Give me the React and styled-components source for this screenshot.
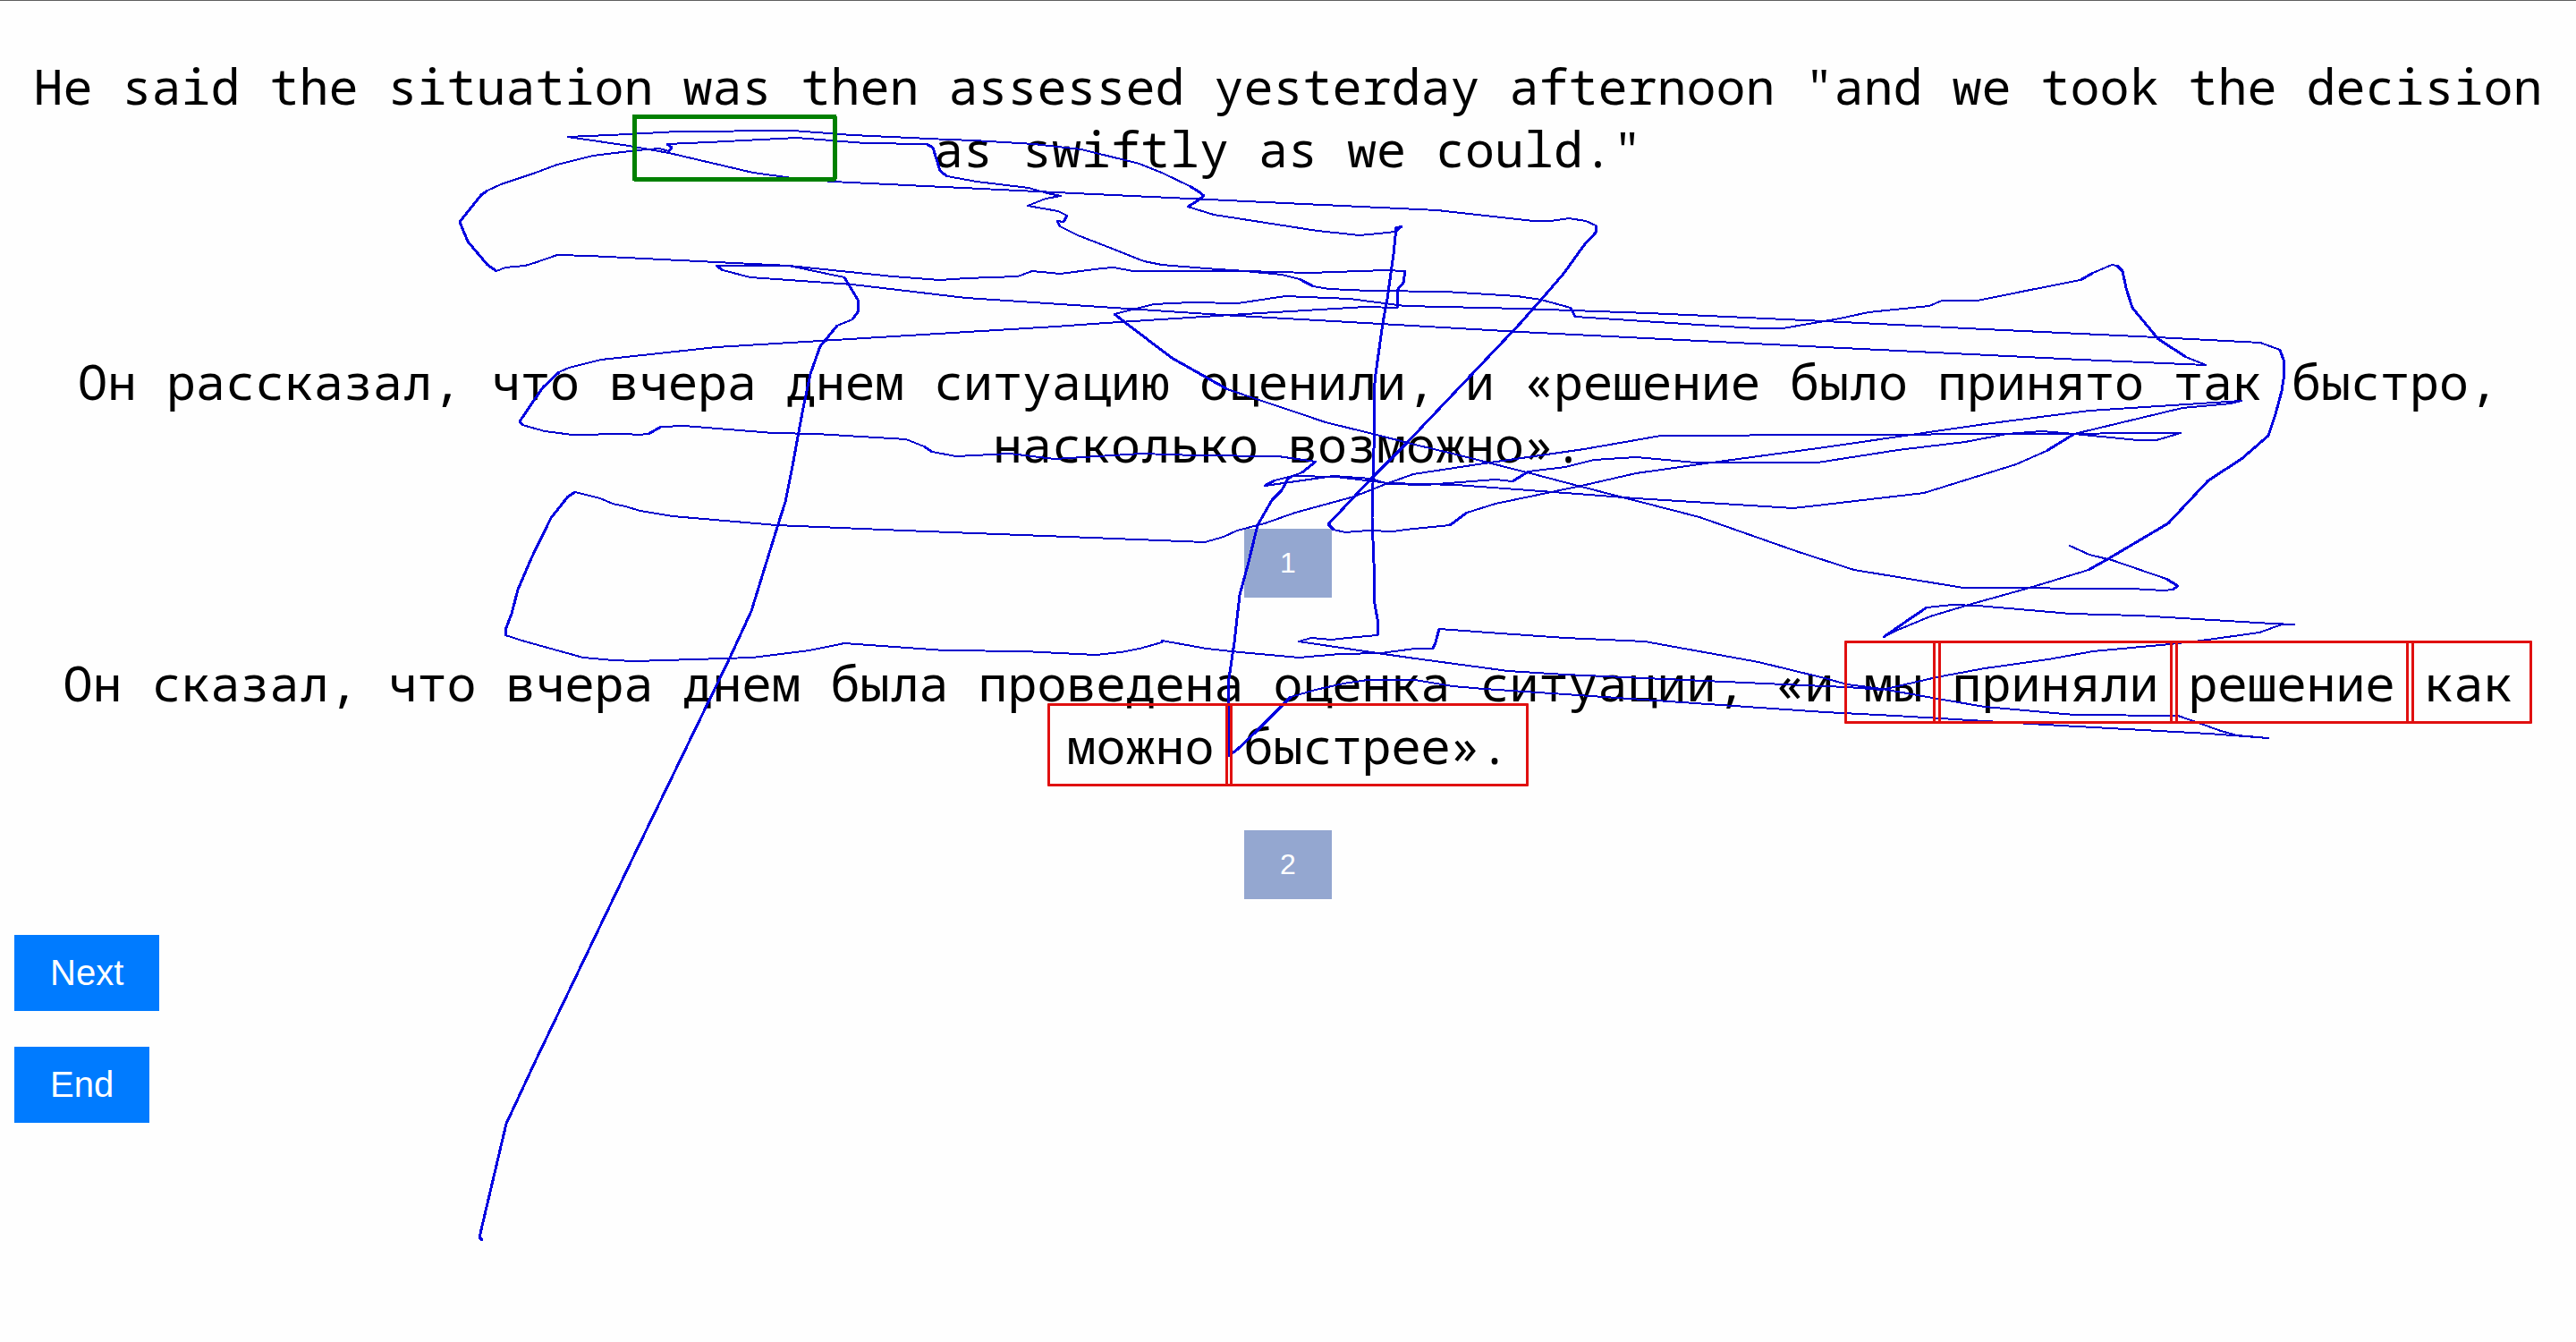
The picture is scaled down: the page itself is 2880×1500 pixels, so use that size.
import React from "react";
import styled, { createGlobalStyle } from "styled-components";

const GlobalStyle = createGlobalStyle`
  *, *::before, *::after { box-sizing: border-box; }
  html { background: #fefefe; }
  body { margin: 0; }
`;

const Page = styled.main`
  position: relative;
  min-height: 100vh;
  padding: 60px 16px 0;
  border-top: 1px solid #5f5f5f;
  color: #000;
`;

const Source = styled.p`
  margin: 0 0 190px;
  font: 55px/70px Consolas, "Noto Sans Mono", "DejaVu Sans Mono", monospace;
  text-align: center;
`;

const Candidate = styled(Source)`
  margin: 0 0 60px;
`;

const Option = styled.section`
  display: flex;
  flex-direction: column;
  align-items: center;
  margin-bottom: 60px;
`;

const Word = styled.span`
  position: relative;
  display: inline-block;

  &::after {
    content: "";
    position: absolute;
    z-index: 2;
    inset: -12px -21px -11px;
    border: 3px solid #e01010;
    border-radius: 1px;
  }
`;

const Button = styled.button`
  border: 0;
  padding: 20px 40px;
  color: #fff;
  background: #007bff;
  font: 40px/45px "Liberation Sans", Arial, sans-serif;
`;

const ChoiceButton = styled(Button)`
  background: #94a7d0;
  font-size: 32px;
  line-height: 37px;
`;

const Actions = styled.div`
  display: flex;
  flex-direction: column;
  align-items: flex-start;
  gap: 40px;
  margin-top: -20px;
`;

const GazeLayer = styled.svg`
  position: absolute;
  z-index: 1;
  top: 0;
  left: 0;
  display: block;
  width: 100%;
  pointer-events: none;
  fill: none;
  stroke-linejoin: round;
  stroke-linecap: round;
  shape-rendering: crispEdges;
`;

const traces = [
  "635,152 703,149 757,146 886,145 953,150 1060,155 1089,156 1156,160 1209,166 1274,182 1301,193 1330,207 1340,213 1346,218 1338,224 1328,230 1357,239 1428,250 1473,257 1520,262 1542,260 1560,258 1567,252 1561,253 1558,283 1551,333 1546,360 1538,417 1536,437 1536,500 1534,578 1536,628 1537,674 1541,697 1540,709 1506,712 1489,714 1466,712 1452,716 1533,728 1582,735 1686,749 1750,753 2040,766 2065,767 2104,770 2165,756 2219,746 2290,736 2340,727 2426,719 2461,715 2526,706 2551,697 2565,697 2540,696 2390,687 2315,685 2269,681 2211,676 2183,675 2154,678 2129,695 2106,711 2122,703 2158,688 2201,675 2269,656 2335,636 2358,623 2424,584 2469,536 2506,512 2536,486 2544,462 2551,436 2553,423 2553,401 2549,390 2527,382 2411,376 2219,367 2040,358 1843,349 1700,344 1571,341 1509,333 1437,330 1384,338 1332,337 1290,339 1274,343 1246,350 1256,358 1310,399 1372,434 1482,471 1535,484 1582,496 1624,506 1711,528 1768,543 1900,577 2011,616 2073,636 2195,656 2383,657 2419,659 2429,658 2435,654 2422,646 2361,625 2336,619 2314,609",
  "635,152 703,162 748,170 842,192 886,198 931,202 1180,214 1607,234 1714,246 1734,246 1754,243 1773,246 1784,251 1784,259 1771,273 1748,305 1723,334 1700,360 1571,496 1533,534 1485,585 1491,591 1504,594 1529,592 1558,593 1571,591 1621,586 1640,572 1672,562 1768,542 1829,528 1914,516 2040,499 2219,473 2336,458 2506,447 2494,450 2440,455 2319,484 2288,503 2254,518 2151,550 2040,563 2005,567 1829,556 1750,550 1628,541 1552,539 1494,532 1445,531 1440,534 1433,547 1422,558 1406,586 1395,631 1386,664 1380,717 1373,764 1373,844 1383,837 1404,817 1443,778 1471,770 1502,763 1529,759 1582,759 1624,766 1659,769 1750,775 2040,795 2119,799 2236,806 2304,810 2469,819 2536,824 2501,821 2483,816 2458,807 2435,799 2319,798 2219,789 2172,781 2104,769 2065,764 2040,757 1966,739 1839,716 1750,712 1678,707 1609,702 1605,717 1602,724 1582,724 1544,729 1498,730 1452,734 1376,727 1349,724 1299,715 1299,717 1274,724 1253,728 1225,731 1145,727 1056,726 944,718 905,726 841,734 710,738 685,737 652,734 587,716 565,709 565,703 572,685 579,658 594,623 616,578 635,554 643,549 671,556 685,562 699,565 716,570 752,576 868,586 1011,592 1220,600 1347,605 1368,599 1383,592 1414,584 1448,572 1514,554 1552,539 1580,529 1659,517 1771,501 1857,486 2260,484 2438,483 2411,491 2390,491 2319,484 2283,481 2244,484 2197,493 2122,502 2032,516 1896,516 1829,510 1782,513 1750,521 1709,526 1691,537 1672,535 1594,541 1552,540 1533,534 1491,531 1414,542 1425,536 1445,531 1456,527 1471,515 1429,509 1337,508 1276,506 1179,512 1129,506 1069,509 1042,504 1033,498 1013,490 962,487 913,484 864,483 765,475 739,476 725,484 714,485 699,484 640,485 609,481 584,474 581,470 598,445 607,432 625,415 636,410 672,401 801,387 917,380 1180,364 1236,360 1392,350 1526,342 1562,343 1563,322 1569,315 1571,302 1549,301 1464,304 1392,302 1267,302 1245,298 1232,299 1185,305 1154,302 1138,308 1080,310 1051,312 998,308 882,296 801,292 659,285 623,284 600,292 587,296 565,298 555,302 545,295 523,269 514,247 538,217 545,212 560,205 596,193 623,183 663,173 712,167 737,165 748,168 751,164 746,160 792,158 891,153 967,159 1036,160 1043,164 1051,190 1059,196 1092,202 1150,209 1171,215 1186,218 1169,221 1149,229 1183,235 1193,240 1189,247 1182,246 1185,252 1205,262 1236,274 1279,291 1299,295 1348,299 1392,302 1433,306 1453,311 1468,319 1486,322 1531,324 1616,325 1696,330 1723,334 1756,343 1761,353 1914,363 1964,366 1993,366 2057,355 2089,348 2157,341 2171,335 2211,335 2265,324 2326,312 2340,304 2361,295 2367,296 2373,302 2377,321 2384,343 2413,378 2444,398 2466,407 2326,401 2040,387 1700,370 1526,360 1366,351 1080,332 953,317 839,309 808,301 801,296 882,296 944,309 959,334 959,348 953,356 936,363 917,386 906,417 897,460 886,520 878,560 870,585 840,682 817,732 707,959 600,1182 566,1255 536,1382 539,1385",
];

// Steep strokes are laid down heavier and brighter than the flat ones.
function steepSegments(points) {
  const list = points.split(" ").map((pair) => pair.split(",").map(Number));
  let d = "";
  for (let i = 1; i < list.length; i += 1) {
    const [x0, y0] = list[i - 1];
    const [x1, y1] = list[i];
    if (Math.abs(y1 - y0) * 2 > Math.abs(x1 - x0)) {
      d += `M${x0} ${y0}L${x1} ${y1}`;
    }
  }
  return d;
}

export default function App() {
  return (
    <>
      <GlobalStyle />
      <Page>
        <Source>
          He said the situation was then assessed yesterday afternoon "and we took the decision as
          swiftly as we could."
        </Source>
        <Option>
          <Candidate lang="ru">
            Он рассказал, что вчера днем ситуацию оценили, и «решение было принято так быстро,
            насколько возможно».
          </Candidate>
          <ChoiceButton type="button">1</ChoiceButton>
        </Option>
        <Option>
          <Candidate lang="ru">
            Он сказал, что вчера днем была проведена оценка ситуации, «и <Word>мы</Word>{" "}
            <Word>приняли</Word> <Word>решение</Word> <Word>как</Word> <Word>можно</Word>{" "}
            <Word>быстрее».</Word>
          </Candidate>
          <ChoiceButton type="button">2</ChoiceButton>
        </Option>
        <Actions>
          <Button type="button">Next</Button>
          <Button type="button">End</Button>
        </Actions>
        <GazeLayer viewBox="0 0 2880 1500" aria-hidden="true">
          {traces.map((points) => (
            <g key={points.slice(0, 30)}>
              <polyline points={points} stroke="#0000cc" strokeWidth="2" />
              <path d={steepSegments(points)} stroke="#0000e0" strokeWidth="3" />
            </g>
          ))}
          <rect x="709" y="129" width="224" height="70" stroke="#008000" strokeWidth="5" />
        </GazeLayer>
      </Page>
    </>
  );
}
